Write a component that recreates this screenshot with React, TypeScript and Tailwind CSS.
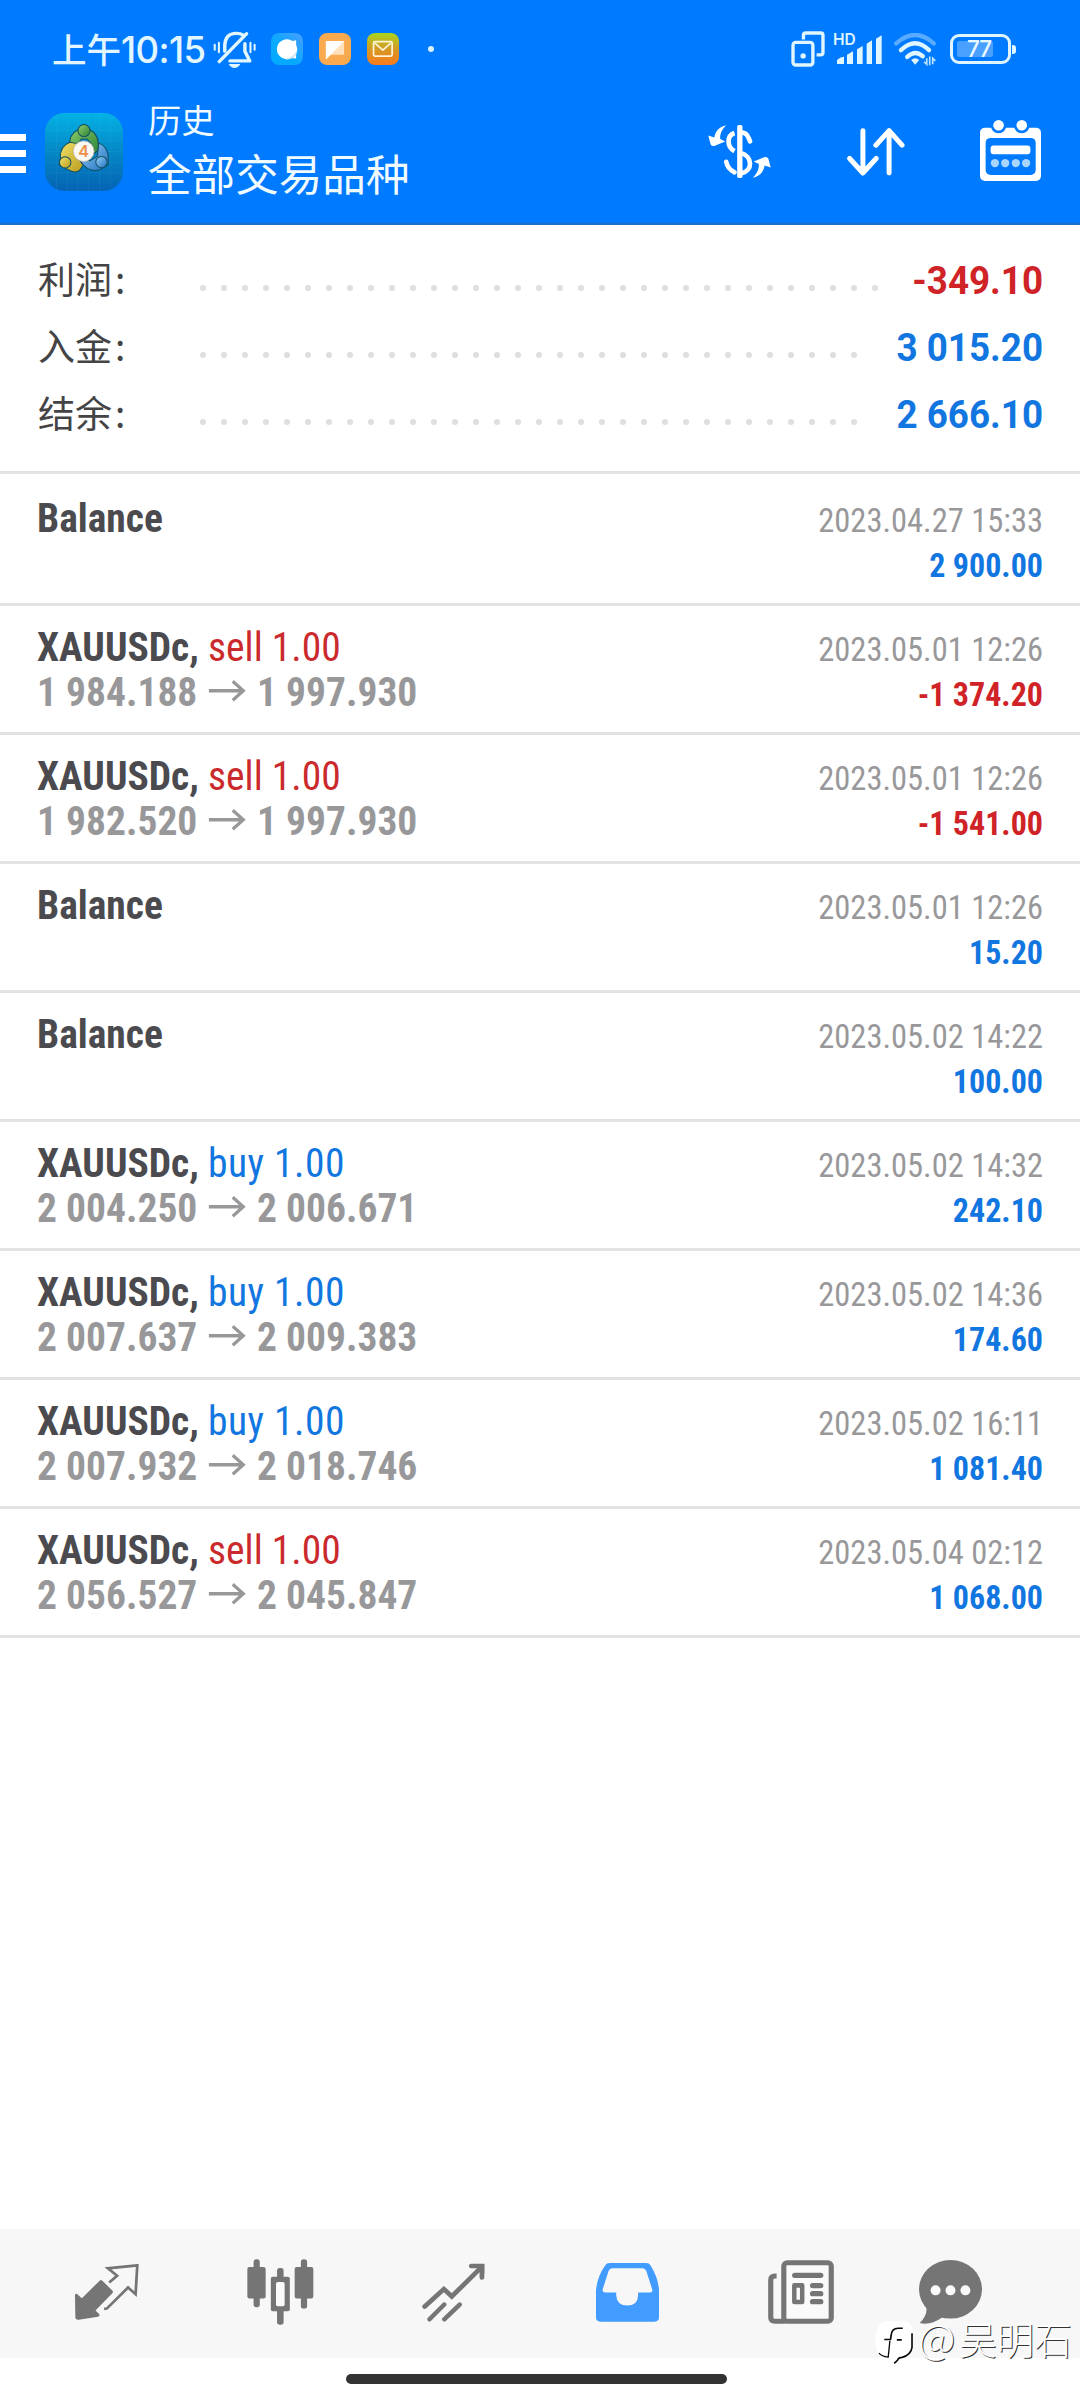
import type { ReactNode } from "react";

type Record = {
  kind: "balance" | "buy" | "sell";
  prices?: [string, string];
  time: string;
  amount: string;
};

const summary = [
  { label: "利润", value: "-349.10", dots: 33 },
  { label: "入金", value: "3 015.20", dots: 32 },
  { label: "结余", value: "2 666.10", dots: 32 },
];

const records: Record[] = [
  { kind: "balance", time: "2023.04.27 15:33", amount: "2 900.00" },
  { kind: "sell", prices: ["1 984.188", "1 997.930"], time: "2023.05.01 12:26", amount: "-1 374.20" },
  { kind: "sell", prices: ["1 982.520", "1 997.930"], time: "2023.05.01 12:26", amount: "-1 541.00" },
  { kind: "balance", time: "2023.05.01 12:26", amount: "15.20" },
  { kind: "balance", time: "2023.05.02 14:22", amount: "100.00" },
  { kind: "buy", prices: ["2 004.250", "2 006.671"], time: "2023.05.02 14:32", amount: "242.10" },
  { kind: "buy", prices: ["2 007.637", "2 009.383"], time: "2023.05.02 14:36", amount: "174.60" },
  { kind: "buy", prices: ["2 007.932", "2 018.746"], time: "2023.05.02 16:11", amount: "1 081.40" },
  { kind: "sell", prices: ["2 056.527", "2 045.847"], time: "2023.05.04 02:12", amount: "1 068.00" },
];

const amountColor = (v: string) => (v.startsWith("-") ? "text-[#cf2328]" : "text-[#1276e0]");

function Icon({ box, className, children }: { box: string; className: string; children: ReactNode }) {
  return (
    <svg viewBox={box} preserveAspectRatio="none" className={`block shrink-0 ${className}`} fill="none">
      {children}
    </svg>
  );
}

function StatusBar() {
  return (
    <div className="flex h-[98px] items-center">
      <div className="ml-[52px] flex w-[161px] items-baseline text-[#e2f6ff]">
        <span className="font-['Noto_Sans_CJK_SC',sans-serif] text-[34.5px] leading-[50px] font-medium">上午</span>
        <span className="font-['Inter',sans-serif] text-[36.5px] leading-[50px] font-medium tracking-[-0.6px]">10:15</span>
      </div>
      {/* Muted, vibrating bell */}
      <Icon box="619 95 124 110" className="h-[37px] w-[43px]">
        <g stroke="#e2f6ff" strokeWidth="10" strokeLinecap="round" strokeLinejoin="round">
          <path d="M653 155V137Q655 104 682 102Q697 101 706 107" />
          <path d="M716 103L637 186" />
          <path d="M711 133V155L725 184H668" />
          <path d="M624 136V151M636 130V158M727 130V158M739 136V151" strokeWidth="6" />
        </g>
        <path d="M664 193H698Q691 205 681 205Q671 205 664 193Z" fill="#e2f6ff" />
      </Icon>
      <Icon box="0 0 93 97" className="ml-[15px] h-8 w-8">
        <defs>
          <linearGradient id="chat" x1="0" y1="1" x2="1" y2="0">
            <stop offset=".4" stopColor="#04aaff" />
            <stop offset="1" stopColor="#4a9dff" />
          </linearGradient>
        </defs>
        <rect width="93" height="97" rx="24" fill="url(#chat)" />
        <path d="M17 49a30 30 0 0 1 46-25l10-2 0 14a30 30 0 0 1 0 27l0 14-12-1a30 30 0 0 1-44-27Z" fill="#fff" />
        <path d="M76 50Q70 72 40 79Q60 84 73 66Z" fill="#c9e6f8" />
      </Icon>
      <Icon box="0 0 93 97" className="ml-4 h-8 w-8">
        <rect width="93" height="97" rx="24" fill="#f9a94e" />
        <path d="M20 24H73V66H35L20 80Z" fill="#ffe2bd" />
        <path d="M20 24H73L20 80Z" fill="#fff" />
      </Icon>
      <Icon box="0 0 93 97" className="ml-4 h-8 w-8">
        <defs>
          <linearGradient id="mail" x1="0" y1="0" x2="0" y2="1">
            <stop offset="0" stopColor="#a9d51c" />
            <stop offset=".5" stopColor="#d49a25" />
            <stop offset="1" stopColor="#f97a1a" />
          </linearGradient>
        </defs>
        <rect width="93" height="97" rx="24" fill="url(#mail)" />
        <g stroke="#fff3d8" strokeWidth="5" strokeLinejoin="round">
          <rect x="19" y="26" width="54" height="44" rx="4" />
          <path d="M23 31L46 52L69 31" />
        </g>
      </Icon>
      <span className="ml-[29px] size-[6px] rounded-full bg-[#d8f0ff]" />

      <div className="ml-auto flex items-center">
        <Icon box="302 35 101 107" className="h-[36px] w-[34px]">
          <g stroke="#dff5ff" strokeWidth="10" strokeLinejoin="round">
            <path d="M339 60V48Q339 41 346 41H390Q397 41 397 48V99Q397 106 390 106H378" />
            <rect x="308" y="69" width="59" height="67" rx="8" />
          </g>
          <circle cx="338" cy="109" r="8" fill="#dff5ff" />
        </Icon>
        <div className="relative ml-[12px]">
          <Icon box="440 45 135 87" className="h-[29px] w-[45px]">
            <g fill="#dff5ff">
              <path d="M440 132V120Q450 110 461 110V132Z" />
              <path d="M470 132V104L488 94V132Z" />
              <path d="M500 132V88L517 78V132Z" />
              <path d="M529 132V71L545 61V132Z" />
              <path d="M557 132V56L574 46V132Z" />
            </g>
          </Icon>
          <span className="absolute -top-px -left-[4px] font-['Inter',sans-serif] text-[15.5px] leading-[12px] font-semibold text-[#dff5ff]">HD</span>
        </div>
        <Icon box="611 43 127 98" className="ml-[12px] h-[33px] w-[42px]">
          <g stroke="#dff5ff" strokeWidth="13" strokeLinecap="round">
            <path d="M618 74Q675 24 731 74" opacity=".4" />
            <path d="M632 94Q675 53 717 94" />
            <path d="M651 114Q675 92 698 112" />
          </g>
          <path d="M663 123Q675 113 687 123L675 137Z" fill="#dff5ff" />
          <path d="M710 118V136L702 129M719 113V139M728 136V118L736 126" stroke="#bfe4ff" strokeWidth="5" />
        </Icon>
        <div className="relative ml-[14px] flex h-[30px] w-[61px] items-center rounded-[9px] border-[3px] border-[#dff5ff] pl-1">
          <span className="h-4 w-9 rounded-[2px] bg-[#4aa0ff]" />
          <span className="absolute top-0 left-[14px] font-['Inter',sans-serif] text-[22.5px] leading-[24px] font-medium tracking-[-1px] text-[#e8f8ff]">77</span>
        </div>
        <span className="mr-[64px] ml-px h-[9px] w-[4px] rounded-r-[3px] bg-[#dff5ff]" />
      </div>
    </div>
  );
}

function AppLogo() {
  return (
    <svg viewBox="16 188 232 235" preserveAspectRatio="none" className="ml-[19px] h-[78px] w-[78px] shrink-0">
      <defs>
        <linearGradient id="tile" x1="0" y1="0" x2="0" y2="1">
          <stop offset="0" stopColor="#04b2e6" />
          <stop offset=".5" stopColor="#0487c4" />
          <stop offset="1" stopColor="#0563b4" />
        </linearGradient>
        <linearGradient id="green" x1="0" y1="0" x2="1" y2="1">
          <stop offset="0" stopColor="#8fce6c" />
          <stop offset="1" stopColor="#2c8438" />
        </linearGradient>
        <linearGradient id="yellow" x1="0" y1="0" x2="1" y2="1">
          <stop offset="0" stopColor="#f2e36a" />
          <stop offset="1" stopColor="#b99c1d" />
        </linearGradient>
        <linearGradient id="azure" x1="0" y1="0" x2="1" y2="1">
          <stop offset="0" stopColor="#9bd3f6" />
          <stop offset="1" stopColor="#1d6fc0" />
        </linearGradient>
      </defs>
      <rect x="16" y="188" width="232" height="235" rx="58" fill="url(#tile)" />
      <path d="M50 190V421M82 188V423M114 188V423M146 188V423M178 188V423M210 190V421M17 240H247M16 272H248M16 304H248M16 336H248M16 368H248" stroke="#5cc8f2" strokeOpacity=".15" strokeWidth="2" />
      <g stroke="#124f63" strokeWidth="3">
        <path d="M90 290Q86 252 112 240L132 224L152 240Q180 256 174 300L160 312Q160 280 140 266H124L108 290Z" fill="url(#green)" />
        <path d="M62 322Q60 288 90 276L112 280L106 312L130 345L118 362Q104 370 88 360L58 344Z" fill="url(#yellow)" />
        <path d="M176 278Q206 292 204 326L204 344L180 358Q150 368 130 344L118 328L150 332L172 318Z" fill="url(#azure)" />
        <circle cx="132" cy="241" r="18" fill="url(#green)" />
        <circle cx="76" cy="337" r="17" fill="url(#yellow)" />
        <circle cx="184" cy="336" r="17" fill="url(#azure)" />
      </g>
      <circle cx="131" cy="303" r="31" fill="#fbf7f3" stroke="#b9b3a6" strokeWidth="2" />
      <text x="131" y="320" textAnchor="middle" fontFamily="Inter, sans-serif" fontSize="48" fontWeight="600" fill="#e9924f">4</text>
    </svg>
  );
}

function Toolbar() {
  return (
    <div className="flex h-[107px] items-center">
      <div className="mt-[3px] flex w-[26px] flex-col gap-[9px]">
        <span className="h-[7px] bg-white" />
        <span className="h-[7px] bg-white" />
        <span className="h-[7px] bg-white" />
      </div>
      <AppLogo />
      <div className="ml-[25px] self-start font-['Noto_Sans_CJK_SC',sans-serif] text-[#f0fbff]">
        <div className="text-[33.3px] leading-[42px]">历史</div>
        <div className="text-[43.6px] leading-[65px]">全部交易品种</div>
      </div>
      <div className="mr-[39px] ml-auto flex items-center">
        {/* Currency exchange */}
        <Icon box="53 315 190 158" className="h-[53px] w-[63px]">
          <g stroke="#fff" strokeWidth="14">
            <path d="M133 339C109 347 109 380 133 393" />
            <path d="M150 337C168 337 172 344 180 364" strokeLinecap="round" />
            <path d="M150 398C190 408 188 452 154 459" />
            <path d="M108 425Q112 446 133 456" strokeLinecap="round" />
            <path d="M150 340V362" strokeWidth="6" />
          </g>
          <rect x="141" y="315" width="16" height="158" rx="5" fill="#fff" />
          <path id="swap" d="M108 316C88 320 76 332 72 352L54 346L61 373Q65 380 74 377L105 364L90 357C88 342 96 327 108 316Z" fill="#fff" />
          <use href="#swap" transform="rotate(180 148 394)" />
        </Icon>
        <Icon box="469 322 175 145" className="ml-[76px] h-[48px] w-[58px]">
          <path d="M517 330V458M477 414L517 458L557 414M596 458V330M556 374L596 330L635 374" stroke="#fff" strokeWidth="15" strokeLinecap="round" strokeLinejoin="round" />
        </Icon>
        <Icon box="869 300 184 184" className="mb-[2px] ml-[75px] h-[61px] w-[61px]">
          <rect x="869" y="323" width="184" height="161" rx="15" fill="#fff" />
          <circle cx="925" cy="316" r="24" fill="#007aff" />
          <circle cx="995" cy="316" r="24" fill="#007aff" />
          <circle cx="925" cy="316" r="16" fill="#fff" />
          <circle cx="995" cy="316" r="16" fill="#fff" />
          <rect x="886" y="354" width="151" height="112" rx="15" fill="#007aff" />
          <rect x="901" y="377" width="120" height="26" rx="9" fill="#fff" />
          <g fill="#a9d6ff">
            <circle cx="914" cy="430" r="12.5" />
            <circle cx="945" cy="430" r="12.5" />
            <circle cx="977" cy="430" r="12.5" />
            <circle cx="1008" cy="430" r="12.5" />
          </g>
        </Icon>
      </div>
    </div>
  );
}

function Summary() {
  return (
    <section className="h-[249px] border-b-[3px] border-[#e3e3e3] pt-[23px]">
      {summary.map((s) => (
        <div key={s.label} className="flex h-[67px] items-center pr-[37px] pl-[38px]">
          <div className="mb-[6px] w-[162px] font-['Noto_Sans_CJK_SC',sans-serif] text-[37px] leading-[61px] text-[#444446]">
            {s.label}
            <span className="ml-[3px]">:</span>
          </div>
          <div className="mt-[13px] flex gap-[15px]">
            {Array.from({ length: s.dots }, (_, i) => (
              <span key={i} className="size-[6px] rounded-full bg-[#dfdfdf]" />
            ))}
          </div>
          <div className={`ml-auto origin-[50%_70%] scale-y-[1.04] font-['Roboto',sans-serif] text-[36.8px] leading-[67px] font-bold ${amountColor(s.value)}`}>{s.value}</div>
        </div>
      ))}
    </section>
  );
}

function RecordRow({ r, first }: { r: Record; first: boolean }) {
  return (
    <li
      className={`border-b-[3px] border-[#e3e3e3] pr-[37px] pl-[37px] font-['Roboto_Condensed','Roboto',sans-serif] text-[39.5px] leading-[45px] ${
        first ? "h-[132px] pt-[22px]" : "h-[129px] pt-[19px]"
      }`}
    >
      <div className="flex h-[45px] items-baseline justify-between">
        <div className="origin-[50%_80%] scale-y-[1.05] whitespace-pre">
          <span className="font-bold text-[#4b4b4f]">{r.kind === "balance" ? "Balance" : "XAUUSDc, "}</span>
          {r.kind === "sell" && <span className="text-[#cb2a2d]">sell 1.00</span>}
          {r.kind === "buy" && <span className="tracking-[0.5px] text-[#1276e0]">buy 1.00</span>}
        </div>
        <div className="origin-[50%_76%] scale-y-[1.03] text-[32.5px] text-[#98989a]">{r.time}</div>
      </div>
      <div className="flex h-[45px] items-baseline justify-between font-bold">
        <div className="flex origin-[50%_80%] scale-y-[1.05] items-baseline text-[#98989a]">
          {r.prices ? (
            <>
              <span className="w-[171px]">{r.prices[0]}</span>
              <svg viewBox="0 0 38 22" className="mr-[11px] h-[21px] w-[38px] translate-y-[-4px]" fill="none" stroke="#98989a" strokeWidth="3.4">
                <path d="M0 11H36M25 1.5L36 11L25 20.5" />
              </svg>
              <span>{r.prices[1]}</span>
            </>
          ) : (
            <span>&nbsp;</span>
          )}
        </div>
        <div className={`origin-[50%_76%] scale-y-[1.06] text-[32px] ${amountColor(r.amount)}`}>{r.amount}</div>
      </div>
    </li>
  );
}

function BottomNav() {
  return (
    <nav className="flex h-[129px] items-center bg-[#f7f7f7] pb-[3px] pl-[20px]">
      <div className="flex w-[173.5px] justify-center">
        <Icon box="219 167 187 167" className="h-[56px] w-[64px]">
          <path d="M219 260Q219 254 224 256L239 269L291 217Q295 213 299 217L328 246Q332 250 328 254L279 306L290 317Q292 323 286 324L230 333Q220 334 220 325Z" fill="#757575" />
          <path d="M319 222L342 202L315 180L401 171L396 257L374 237L312 300L304 301" stroke="#757575" strokeWidth="8" />
        </Icon>
      </div>
      <div className="flex w-[173.5px] justify-center">
        <Icon box="717 150 194 197" className="h-[66px] w-[67px]">
          <g fill="#757575">
            <rect x="736" y="151" width="18" height="143" rx="8" />
            <rect x="718" y="174" width="53" height="94" rx="6" />
            <rect x="804" y="177" width="19" height="169" rx="8" />
            <rect x="786" y="203" width="55" height="103" rx="6" />
            <rect x="873" y="151" width="18" height="147" rx="8" />
            <rect x="855" y="174" width="54" height="94" rx="6" />
          </g>
          <rect x="801" y="219" width="25" height="72" rx="5" fill="#fafafa" />
        </Icon>
      </div>
      <div className="flex w-[173px] justify-center">
        <Icon box="1224 157 184 176" className="h-[59px] w-[63px]">
          <g stroke="#757575" strokeWidth="14" strokeLinecap="round">
            <path d="M1232 287L1288 235L1311 257L1394 173" />
            <path d="M1368 166H1399V200" />
            <path d="M1246 325L1289 281M1289 325L1334 281" strokeWidth="13" />
          </g>
          <path d="M1380 160H1406V190Z" fill="#757575" />
        </Icon>
      </div>
      <div className="flex w-[174px] justify-center">
        <Icon box="161 158 184 176" className="h-[59px] w-[63px]">
          <path
            fill="#429bff"
            fillRule="evenodd"
            d="M201 158H308Q316 158 320 165Q344 205 345 240V320Q345 333 332 333H174Q161 333 161 320V240Q164 200 188 165Q192 158 201 158ZM209 174Q201 174 198 181L181 235Q178 246 188 246H220V255Q222 285 252 285Q283 285 284 255V246H319Q328 246 325 236L308 182Q305 174 297 174Z"
          />
        </Icon>
      </div>
      <div className="flex w-[174px] justify-center">
        <Icon box="664 150 192 192" className="h-[64px] w-[66px]">
          <g stroke="#757575" strokeWidth="15">
            <path d="M689 198H684Q672 198 672 210V322Q672 334 684 334H715" />
            <rect x="710" y="158" width="138" height="176" rx="10" fill="#fafafa" />
          </g>
          <g fill="#757575">
            <rect x="734" y="188" width="91" height="16" rx="8" />
            <path fillRule="evenodd" d="M741 219H763Q770 219 770 226V276Q770 283 763 283H741Q734 283 734 276V226Q734 219 741 219ZM747 233V269H757V233Z" />
            <rect x="786" y="219" width="39" height="16" rx="8" />
            <rect x="786" y="243" width="39" height="16" rx="8" />
            <rect x="786" y="267" width="39" height="16" rx="8" />
          </g>
        </Icon>
      </div>
      <div className="flex w-[125px] justify-center">
        <Icon box="178 60 190 190" className="h-[64px] w-[63px]">
          <ellipse cx="273" cy="147" rx="95" ry="87" fill="#757575" />
          <path d="M198 195Q208 220 180 247Q210 256 248 231Z" fill="#757575" />
          <circle cx="228" cy="150" r="15" fill="#fafafa" />
          <circle cx="273" cy="150" r="15" fill="#fafafa" />
          <circle cx="318" cy="150" r="15" fill="#fafafa" />
        </Icon>
      </div>
    </nav>
  );
}

function Watermark() {
  return (
    <div className="absolute right-[8px] bottom-[35px] flex h-[46px] items-center">
      <Icon box="48 242 118 136" className="h-[45px] w-[39px]">
        <path d="M58 262Q66 245 90 246H135Q160 248 163 275V325Q160 350 130 357L106 376L104 360Q70 364 58 345Q46 320 50 290Z" fill="#fff" />
        <g stroke="#0a0a0a" strokeWidth="5">
          <path d="M132 267H118Q98 268 97 288L95 301H76M114 302H129" />
          <path d="M93 305L88 354Q68 352 60 342" strokeWidth="4" />
          <path d="M160 282V325Q157 348 130 355Q118 356 116 364L106 373" />
        </g>
      </Icon>
      <div className="mb-[11px] ml-[4px] flex items-baseline font-['Noto_Sans_CJK_SC',sans-serif] text-[37.7px] leading-[46px] font-light text-white [text-shadow:1px_1px_0_#333]">
        <span className="w-[41px] text-[41px]">@</span>
        <span>吴明石</span>
      </div>
    </div>
  );
}

export default function App() {
  return (
    <div className="relative flex h-[2400px] w-[1080px] flex-col overflow-hidden bg-white">
      <header className="h-[225px] shrink-0 border-b-2 border-[#1c6fc6] bg-[#007aff]">
        <StatusBar />
        <Toolbar />
      </header>
      <main className="flex-1">
        <Summary />
        <ul>
          {records.map((r, i) => (
            <RecordRow key={i} r={r} first={i === 0} />
          ))}
        </ul>
      </main>
      <BottomNav />
      <div className="flex h-[42px] justify-center pt-4">
        <span className="mr-[7px] h-[10px] w-[381px] rounded-full bg-[#323232]" />
      </div>
      <Watermark />
    </div>
  );
}
